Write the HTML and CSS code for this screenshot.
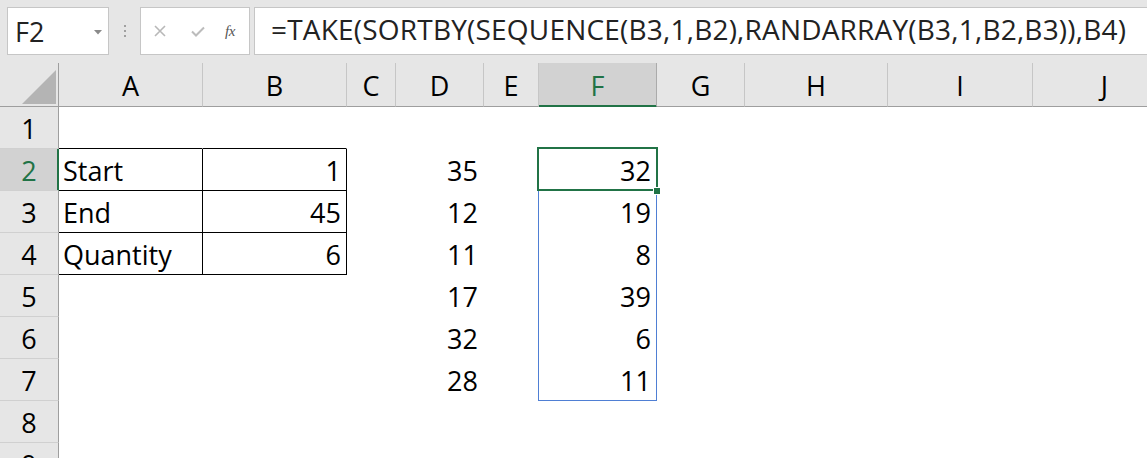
FILE: index.html
```html
<!DOCTYPE html>
<html>
<head>
<meta charset="utf-8">
<link rel="stylesheet" href="styles.css">
</head>
<body>
<div class="app">
  <div class="fbar">
    <div class="namebox">
      <span class="nb-text">F2</span>
      <svg class="nb-arrow" width="8" height="5" viewBox="0 0 8 5"><path d="M0 0H8L4 4.5Z" fill="#8a8a8a"/></svg>
    </div>
    <div class="grip"><i></i><i></i><i></i></div>
    <div class="fxbtns">
      <svg class="ic" width="12" height="12" viewBox="0 0 12 12"><path d="M1 1L11 11M11 1L1 11" stroke="#b8b8b8" stroke-width="1.6" fill="none"/></svg>
      <svg class="ic" width="14" height="11" viewBox="0 0 14 11"><path d="M1 5.5L5 9.5L13 1.5" stroke="#bcbcbc" stroke-width="2" fill="none"/></svg>
      <span class="fx">fx</span>
    </div>
    <div class="formula">=TAKE(SORTBY(SEQUENCE(B3,1,B2),RANDARRAY(B3,1,B2,B3)),B4)</div>
  </div>

  <div class="sheet">
    <div class="corner"><svg width="34" height="34" viewBox="0 0 34 34"><path d="M34 0V34H0Z" fill="#b4b4b4"/></svg></div>
    <div class="ch">A</div><div class="ch">B</div><div class="ch">C</div><div class="ch">D</div><div class="ch">E</div>
    <div class="ch sel">F</div><div class="ch">G</div><div class="ch">H</div><div class="ch">I</div><div class="ch">J</div>

    <div class="rh">1</div>
    <div class="c tb"></div><div class="c tb"></div><div class="c"></div><div class="c"></div><div class="c"></div><div class="c"></div><div class="c"></div><div class="c"></div><div class="c"></div><div class="c"></div>

    <div class="rh sel">2</div>
    <div class="c t">Start</div><div class="c t n">1</div><div class="c"></div><div class="c n">35</div><div class="c"></div>
    <div class="c n active">32<span class="sel-range"></span><span class="sel-active"></span><span class="sel-handle"></span></div>
    <div class="c"></div><div class="c"></div><div class="c"></div><div class="c"></div>

    <div class="rh">3</div>
    <div class="c t">End</div><div class="c t n">45</div><div class="c"></div><div class="c n">12</div><div class="c"></div><div class="c n">19</div><div class="c"></div><div class="c"></div><div class="c"></div><div class="c"></div>

    <div class="rh">4</div>
    <div class="c t">Quantity</div><div class="c t n">6</div><div class="c"></div><div class="c n">11</div><div class="c"></div><div class="c n">8</div><div class="c"></div><div class="c"></div><div class="c"></div><div class="c"></div>

    <div class="rh">5</div>
    <div class="c"></div><div class="c"></div><div class="c"></div><div class="c n">17</div><div class="c"></div><div class="c n">39</div><div class="c"></div><div class="c"></div><div class="c"></div><div class="c"></div>

    <div class="rh">6</div>
    <div class="c"></div><div class="c"></div><div class="c"></div><div class="c n">32</div><div class="c"></div><div class="c n">6</div><div class="c"></div><div class="c"></div><div class="c"></div><div class="c"></div>

    <div class="rh">7</div>
    <div class="c"></div><div class="c"></div><div class="c"></div><div class="c n">28</div><div class="c"></div><div class="c n">11</div><div class="c"></div><div class="c"></div><div class="c"></div><div class="c"></div>

    <div class="rh">8</div>
    <div class="c"></div><div class="c"></div><div class="c"></div><div class="c"></div><div class="c"></div><div class="c"></div><div class="c"></div><div class="c"></div><div class="c"></div><div class="c"></div>

    <div class="rh">9</div>
    <div class="c"></div><div class="c"></div><div class="c"></div><div class="c"></div><div class="c"></div><div class="c"></div><div class="c"></div><div class="c"></div><div class="c"></div><div class="c"></div>
  </div>
</div>
</body>
</html>
```

FILE: styles.css
```css
html, body {
  margin: 0;
  padding: 0;
  background: #e6e6e6;
  overflow: hidden;
  width: 1147px;
  height: 458px;
}

.app {
  font-family: "Open Sans", Lato, sans-serif;
  color: #000;
  height: 458px;
  overflow: hidden;
}

/* ---------- formula bar ---------- */
.fbar {
  display: flex;
  align-items: flex-start;
  height: 63px;
  box-sizing: border-box;
  padding: 7px 0 0 7px;
}

.namebox {
  width: 102px;
  height: 48px;
  box-sizing: border-box;
  background: #fff;
  border: 1px solid #c6c6c6;
  display: flex;
  align-items: center;
  padding-left: 7px;
  padding-right: 6px;
}

.nb-text {
  flex: 1;
  font-size: 27px;
  line-height: 46px;
  color: #222;
  padding-top: 1px;
}

.nb-arrow {
  margin-top: 2px;
}

.grip {
  width: 31px;
  height: 48px;
  display: flex;
  flex-direction: column;
  align-items: center;
  justify-content: center;
  gap: 3px;
}

.grip i {
  display: block;
  width: 2px;
  height: 2px;
  background: #a0a0a0;
}

.fxbtns {
  width: 110px;
  height: 48px;
  box-sizing: border-box;
  background: #fff;
  border: 1px solid #c6c6c6;
  display: flex;
  align-items: center;
  padding-left: 13px;
}

.fxbtns .ic:nth-child(1) { margin-right: 25px; }
.fxbtns .ic:nth-child(2) { margin-right: 20px; }

.fx {
  font-family: "Liberation Serif", serif;
  font-style: italic;
  font-size: 15px;
  color: #555;
  letter-spacing: -0.5px;
}

.formula {
  flex: 1;
  height: 48px;
  box-sizing: border-box;
  margin-left: 4px;
  margin-right: -20px;
  background: #fff;
  border: 1px solid #c6c6c6;
  font-size: 28px;
  line-height: 42px;
  letter-spacing: 0.2px;
  padding-left: 16px;
  white-space: nowrap;
  color: #222;
}

/* ---------- sheet ---------- */
.sheet {
  display: grid;
  grid-template-columns: 59px 144px 144px 49px 88px 55px 118px 88px 143px 145px 144px;
  grid-template-rows: 44px repeat(9, 42px);
  width: 1177px;
  font-size: 27px;
}

.corner {
  box-sizing: border-box;
  background: #e6e6e6;
  border-right: 1px solid #9e9e9e;
  border-bottom: 1px solid #9e9e9e;
  display: flex;
  align-items: flex-end;
  justify-content: flex-end;
  padding: 0 2px 2px 0;
}

.corner svg { display: block; }

.ch {
  box-sizing: border-box;
  background: #e6e6e6;
  border-right: 1px solid #c6c6c6;
  border-bottom: 1px solid #9e9e9e;
  text-align: center;
  line-height: 41px;
  padding-top: 2px;
}

.ch.sel {
  background: #d2d2d2;
  color: #217346;
  border-bottom-color: #217346;
  border-right-color: #ababab;
  box-shadow: inset 0 -1px 0 #217346;
}

.rh {
  box-sizing: border-box;
  background: #e6e6e6;
  border-right: 1px solid #9e9e9e;
  border-bottom: 1px solid #d0d0d0;
  text-align: center;
  line-height: 41px;
  padding-top: 1px;
}

.rh.sel {
  background: #d2d2d2;
  color: #217346;
  border-right-color: #217346;
  box-shadow: inset -1px 0 0 #217346;
}

.c {
  box-sizing: border-box;
  background: #fff;
  border-right: 1px solid #fff;
  border-bottom: 1px solid #fff;
  line-height: 41px;
  padding: 1px 4px 0 4px;
  white-space: nowrap;
}

.c.n {
  text-align: right;
  padding-right: 5px;
}

.c.t {
  border-right-color: #000;
  border-bottom-color: #000;
}

.c.tb {
  border-bottom-color: #000;
}

/* ---------- selection overlay (drawn from the active cell) ---------- */
.c.active {
  position: relative;
}

.sel-range {
  position: absolute;
  left: -1px;
  top: -1px;
  width: 119px;
  height: 253px;
  box-sizing: border-box;
  border: 1px solid #4f7fd4;
  pointer-events: none;
}

.sel-active {
  position: absolute;
  left: -2px;
  top: -2px;
  width: 121px;
  height: 44px;
  box-sizing: border-box;
  border: 2px solid #217346;
}

.sel-handle {
  position: absolute;
  left: 114px;
  top: 38px;
  width: 6px;
  height: 6px;
  background: #217346;
  border: 1px solid #fff;
}
```
